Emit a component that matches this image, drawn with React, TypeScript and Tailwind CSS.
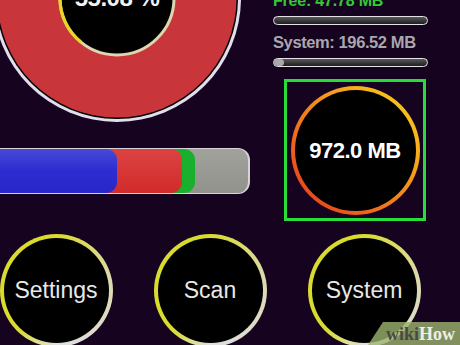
import React from "react";

function Donut() {
  return (
    <div className="relative -mt-[127px] -ml-[8px] h-[250px] w-[250px] shrink-0">
      <svg width="250" height="250" viewBox="0 0 250 250">
        <circle cx="125" cy="125" r="124" fill="#e2dfec" />
        <circle cx="125" cy="125" r="121" fill="#050205" />
        <circle cx="125" cy="125" r="119.5" fill="#c8363c" />
        <circle cx="125" cy="125" r="57" fill="#000" stroke="#ddd6b0" strokeWidth="3" />
        <path d="M 89.1 169.3 A 57 57 0 0 1 96.5 75.6" fill="none" stroke="#e4d820" strokeWidth="3.2" />
        <text
          x="125"
          y="133"
          textAnchor="middle"
          fill="#f2f2f2"
          fontSize="24"
          fontWeight="700"
          letterSpacing="-0.5"
          fontFamily="'Liberation Sans', Arial, sans-serif"
        >
          55.08 %
        </text>
      </svg>
    </div>
  );
}

function UsageBar() {
  return (
    <div className="mt-[25px] h-[46px] w-[250px] overflow-hidden rounded-r-[12px] border-y-[1.5px] border-r-2 border-[#d6d4d8] bg-linear-to-b from-[#a2a29c] to-[#92928c]">
      <div className="grid h-full w-full">
        <div className="col-start-1 row-start-1 h-full w-[195px] rounded-r-[11px] bg-[#19b02d]" />
        <div className="col-start-1 row-start-1 h-full w-[182px] rounded-r-[11px] bg-linear-to-b from-[#dc4242] to-[#d22a2a]" />
        <div className="col-start-1 row-start-1 h-full w-[117px] rounded-r-[11px] bg-linear-to-b from-[#4848d8] via-[#2c2cd0] to-[#2828c8]" />
      </div>
    </div>
  );
}

function SmallBar({ fill }: { fill?: boolean }) {
  return (
    <div className="h-[9px] w-[155px] overflow-hidden rounded-full border-[1.5px] border-[#e4e2e6] bg-linear-to-b from-[#5a5a5a] to-[#1e1e1e]">
      {fill && <div className="h-full w-[10px] rounded-full bg-[#a9a9a9]" />}
    </div>
  );
}

function RoundButton({ label }: { label: string }) {
  return (
    <div className="h-[113px] w-[113px] shrink-0 rounded-full bg-[conic-gradient(from_0deg,#d9dc2c,#ddd9a8_20%,#dcdcd0_40%,#e2e2e2_50%,#d9dc2c_62%,#d9dc2c_100%)] p-[4px]">
      <div className="flex h-full w-full items-center justify-center rounded-full bg-black">
        <span className="text-[23px] leading-none text-[#e8e8e8]">{label}</span>
      </div>
    </div>
  );
}

export default function App() {
  return (
    <div className="relative h-[345px] w-[460px] overflow-hidden bg-[#15031f] font-['Liberation_Sans',Arial,sans-serif]">
      <div className="flex h-[221px] items-start">
        <div className="flex w-[250px] shrink-0 flex-col">
          <Donut />
          <UsageBar />
        </div>
        <div className="ml-[23px] flex w-[160px] flex-col">
          <div className="-mt-[7px] h-[15px] text-[16px] font-bold leading-[15px] tracking-[-0.2px] text-[#35c838]">
            Free: 47.78 MB
          </div>
          <div className="mt-[8px]">
            <SmallBar />
          </div>
          <div className="mt-[9px] h-[16px] text-[16.5px] font-bold leading-[16px] tracking-[-0.4px] text-[#aaa6ae]">
            System: 196.52 MB
          </div>
          <div className="mt-[8px]">
            <SmallBar fill />
          </div>
          <div className="ml-[11px] mt-[12px] flex h-[142px] w-[142px] items-center justify-center border-[3px] border-[#28dc3a]">
            <div className="h-[129px] w-[129px] rounded-full bg-linear-to-bl from-[#f6d81c] via-[#f2861c] to-[#e4241c] p-[4px]">
              <div className="flex h-full w-full items-center justify-center rounded-full bg-black">
                <span className="text-[22px] font-bold tracking-[-0.5px] text-white">972.0 MB</span>
              </div>
            </div>
          </div>
        </div>
      </div>
      <div className="mt-[13px] flex gap-[41px] -ml-[0.5px]">
        <RoundButton label="Settings" />
        <RoundButton label="Scan" />
        <RoundButton label="System" />
      </div>
      <div className="absolute bottom-0 right-0 flex h-[23px] w-[92px] items-center justify-end bg-[#9cb46e]/80 pr-[5px] [clip-path:polygon(15px_0,100%_0,100%_100%,0_100%)]">
        <span className="font-['Liberation_Serif',serif] text-[18px] font-bold leading-none">
          <span className="text-[#4a4a44]">wiki</span>
          <span className="text-[#ecefe6]">How</span>
        </span>
      </div>
    </div>
  );
}
